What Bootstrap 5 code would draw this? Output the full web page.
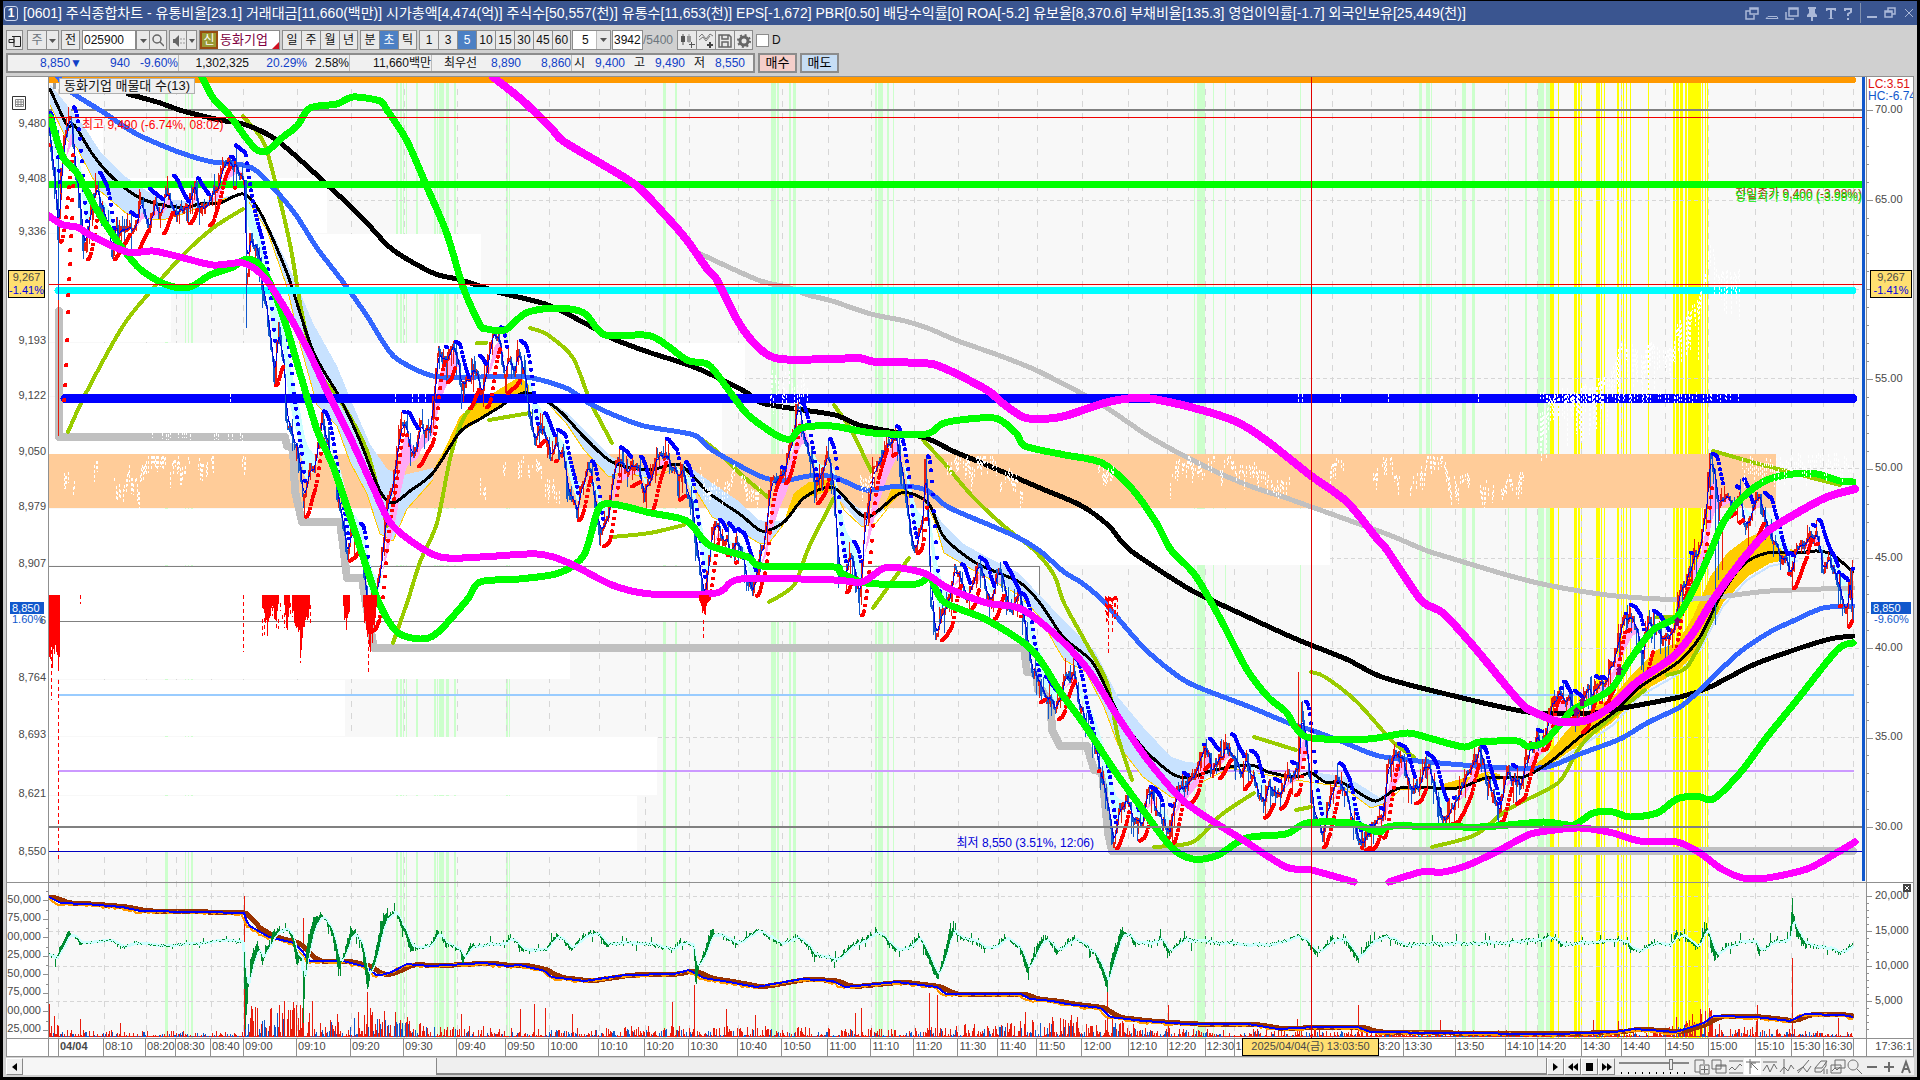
<!DOCTYPE html>
<html lang="ko">
<head>
<meta charset="utf-8">
<meta name="viewport" content="width=device-width, initial-scale=1">
<title>[0601] 주식종합차트</title>
<link rel="stylesheet" href="https://cdn.jsdelivr.net/npm/bootstrap@5.3.0/dist/css/bootstrap.min.css">
<style>
  body{font-family:"Liberation Sans","Noto Sans CJK KR",sans-serif;font-size:12px;line-height:16px;color:#111;background:#d0d0d0;border:solid #000;border-width:1px 3px 3px 3px}
  .title-strip{background:#3a5590;color:#fff;height:24px;padding:0;flex:none}
  .title-strip .win-no{width:14px;height:15px;border:1px solid #cfd8ee;border-radius:3px;font-size:12px;line-height:13px;font-weight:bold;margin:0 5px 0 1px;text-align:center}
  .title-strip h1{font-size:14px;line-height:22px;font-weight:normal}
  .title-strip button{border:0;background:none;padding:0;width:20px;height:20px;color:#aab8d8;line-height:0}
  .tools{height:20px;margin:5px 3px 3px 3px;flex:none}
  .tools>*{height:20px;flex:none}
  .tb{background:#e9e9e9;border:1px solid #8c8c8c;border-right-width:0;padding:0;width:19px;line-height:16px;color:#111;text-align:center}
  .tb:last-child{border-right-width:1px}
  .tb.on{background:#4c80c4;color:#fff}
  .fld{border:1px solid #8c8c8c;background:#fff;font-size:12px;padding:0 1px;border-radius:0;color:#111;height:20px}
  .info{height:20px;margin:0 3px 3px 3px;flex:none}
  .quote{background:#f0f0f0;border:2px solid #8c8c8c;width:749px;color:#111}
  .quote>div{border-right:1px solid #bbb;height:16px;text-align:right}
  .quote>div:last-child{border-right:0}
  .quote b{font-weight:normal;color:#1040c8}
  .quote span,.quote b{display:inline-block}
  .w48{width:48px}.w50{width:50px}
  .order{border:2px solid #8c8c8c;height:20px;width:39px;padding:0;font-size:13px;line-height:14px;margin-left:3px}
  .chart-box{margin:0 3px;border:1px solid #909090;background:#fff;flex:1 1 0;min-height:0}
  .axis-l{width:42px;border-right:1px solid #909090;flex:none}
  .axis-r{width:47px;border-left:1px solid #909090;flex:none}
  .plots{background:#f8f8f8;min-width:0}
  .plots svg.plot{display:block;width:100%;height:100%}
  .ax{position:absolute;font-size:11px;line-height:12px;margin-top:-7px;color:#484848;white-space:nowrap}
  .axis-l .ax{right:2px}
  .axis-l .ax.vol{right:7px}
  .axis-r .ax{left:8px}
  .tick{position:absolute;left:0;height:1px;background:#909090}
  .axis-l .tick{left:auto;right:0}
  .flag{position:absolute;background:#ffdf70;border:1px solid #000;font-size:11px;line-height:13px;text-align:center;color:#484848;z-index:2;overflow:hidden;white-space:nowrap}
  .flag em{display:block;font-style:normal;color:#0000e0}
  .now{position:absolute;background:#1158cc;color:#fff;font-size:11px;line-height:12px;z-index:2;padding:0 2px}
  .note{position:absolute;font-size:12px;line-height:14px;white-space:nowrap}
  .name-tag{left:10px;top:1px;border:1px solid #b0b0b0;background:#f0f0f0;padding:0 4px;font-size:13px}
  .time-row{height:18px;border-top:1px solid #909090;flex:none}
  .time-row .tc{flex:none;border-left:1px solid #909090;font-size:11px;line-height:15px;white-space:nowrap;padding-left:1px;color:#484848;overflow:hidden}
  .scroll{height:17px;margin:1px 3px 2px 3px;flex:none;background:#efefef}
  .sb{border:1px solid #888;border-top-color:#fff;border-left-color:#fff;background:#efefef;padding:0;width:17px;height:17px;line-height:0;color:#000;flex:none}
  .track{width:413px;background:#f6f6f6;flex:none}
  .thumb{background:#efefef;border:1px solid #888;border-width:0 1px 2px 1px}
  .ic{width:17px;height:17px;border:0;background:none;padding:0;line-height:0;color:#6b6b6b;flex:none}
  .speed{width:70px;margin:0 4px;flex:none;height:17px;appearance:none;background:
     linear-gradient(#888,#888) 0 4px/100% 2px no-repeat,
     repeating-linear-gradient(90deg,#000 0 1px,transparent 1px 7px) 2px 14px/100% 2px no-repeat}
  .speed::-webkit-slider-thumb{appearance:none;width:4px;height:11px;margin-top:-4px;background:#eee;border:1px solid #777}
</style>
</head>
<body class="vh-100 m-0 d-flex flex-column overflow-hidden">

<header class="title-strip d-flex align-items-center">
  <span class="win-no">1</span>
  <h1 class="m-0 text-nowrap flex-grow-1">[0601] 주식종합차트 - 유통비율[23.1] 거래대금[11,660(백만)] 시가총액[4,474(억)] 주식수[50,557(천)] 유통수[11,653(천)] EPS[-1,672] PBR[0.50] 배당수익률[0] ROA[-5.2] 유보율[8,370.6] 부채비율[135.3] 영업이익률[-1.7] 외국인보유[25,449(천)]</h1>
  <button aria-label="분리"><svg width="14" height="13" fill="none" stroke="currentColor" stroke-width="1.5"><path d="M5 4H1v8h8V8M5 1h8v6H5zM5 2h8"/></svg></button>
  <button aria-label="접기"><svg width="14" height="13" fill="none" stroke="currentColor"><path d="M3 9.5h9l1 2H1z"/></svg></button>
  <button aria-label="복제"><svg width="14" height="13" fill="none" stroke="currentColor" stroke-width="1.5"><path d="M4 1h9v8H4zM4 2h9M1 5v7h8"/></svg></button>
  <button aria-label="고정"><svg width="14" height="15" fill="currentColor"><path d="M3 1h8v2h-1v4l2 2v2H8v4H6v-4H2V9l2-2V3H3z"/></svg></button>
  <button aria-label="글꼴" style="width:18px"><svg width="12" height="13" fill="currentColor"><path d="M1 1h10v3h-1L9 3H7v8l2 1H3l2-1V3H3L2 4H1z"/></svg></button>
  <button aria-label="도움말" style="width:16px;margin-right:4px"><svg width="10" height="13" fill="none" stroke="currentColor" stroke-width="2"><path d="M2 4V2h6v3L5 7v2M5 11v2"/></svg></button>
  <button aria-label="최소화" style="border-left:1px solid #7f8fae"><svg width="12" height="13" fill="currentColor"><path d="M2 9h10v2H2z"/></svg></button>
  <button aria-label="이전 크기"><svg width="12" height="12" fill="none" stroke="currentColor" stroke-width="1.5"><path d="M4 4V1h7v6H8M1 4h7v6H1zM1 5h7"/></svg></button>
  <button aria-label="닫기" style="width:17px"><svg width="10" height="10" stroke="currentColor"><path d="M1 1l8 8M9 1l-8 8"/></svg></button>
</header>

<div class="tools d-flex">
  <button class="tb" style="border-right-width:1px;width:17px;margin-right:4px" aria-label="메뉴"><svg width="13" height="12" fill="none" stroke="#222"><path d="M4 1.500h8.500v10H7M1 4.500h5v3h-5zM6 2v10" /></svg></button>
  <div class="d-flex" style="margin-right:2px"><button class="tb text-secondary">주</button><button class="tb" style="width:13px" aria-label="주기"><svg width="7" height="4"><path d="M0 0h7L3.500 4z" fill="#555"/></svg></button></div>
  <button class="tb" style="border-right-width:1px;width:19px;margin-right:2px">전</button>
  <input class="fld" style="width:54px" value="025900" aria-label="종목코드">
  <button class="tb" style="width:13px" aria-label="종목 목록"><svg width="7" height="4"><path d="M0 0h7L3.500 4z" fill="#555"/></svg></button>
  <button class="tb" style="border-right-width:1px;width:18px;margin-right:2px" aria-label="검색"><svg width="12" height="13" fill="none" stroke="#666" stroke-width="1.500"><circle cx="5" cy="5" r="4"/><path d="M8 8l4 4"/></svg></button>
  <div class="d-flex" style="margin-right:2px"><button class="tb" style="width:17px" aria-label="음성"><svg width="13" height="12"><path d="M1 4h2l4-4v12L3 8H1z" fill="#666"/><path d="M9 3v2M9 7v2M12 3v2M12 7v2" stroke="#999"/></svg></button><button class="tb" style="width:11px" aria-label="음성 설정"><svg width="6" height="4"><path d="M0 0h6L3 4z" fill="#555"/></svg></button></div>
  <div class="d-flex fld p-0 position-relative" style="width:81px;margin-right:2px"><span style="background:#999a33;border:2px solid #984c10;color:#fff;width:18px;line-height:14px;text-align:center">신</span><span style="color:#800040;padding-left:2px;line-height:17px;font-size:13px">동화기업</span><svg class="position-absolute end-0 bottom-0" width="7" height="7"><path d="M7 0v7H0z" fill="#d01020"/></svg></div>
  <div class="d-flex" style="margin-right:2px"><button class="tb">일</button><button class="tb">주</button><button class="tb">월</button><button class="tb">년</button></div>
  <div class="d-flex" style="margin-right:2px"><button class="tb">분</button><button class="tb on">초</button><button class="tb">틱</button></div>
  <div class="d-flex" style="margin-right:1px"><button class="tb">1</button><button class="tb">3</button><button class="tb on">5</button><button class="tb">10</button><button class="tb">15</button><button class="tb">30</button><button class="tb">45</button><button class="tb">60</button></div>
  <div class="position-relative" style="margin-right:1px"><select class="fld" style="width:39px;appearance:none;padding-left:9px" aria-label="간격"><option>5</option></select><svg class="position-absolute end-0 top-0" width="15" height="20"><path d="M0 .5h14.500v19H0z" fill="#e9e9e9" stroke="#8c8c8c"/><path d="M4 8h7l-3.500 4z" fill="#555"/></svg></div>
  <input class="fld" style="width:31px" value="3942" aria-label="봉 개수">
  <span class="text-secondary" style="width:34px;line-height:20px">/5400</span>
  <div class="d-flex" style="margin-right:3px">
    <button class="tb" aria-label="봉 추가"><svg width="15" height="15" fill="#555"><path d="M1 3h4v6H1zM2.500 1h1v11h-1z"/><path d="M7 3h4v6H7zM8.500 1h1v9h-1z" fill="#999"/><path d="M11 9h1v2h3v1h-3v3h-1v-3H9v-1h2z"/></svg></button>
    <button class="tb" aria-label="지표 추가"><svg width="15" height="15" fill="none" stroke="#777"><path d="M0 4l3-3 4 5 4-5 3 2M0 7l4-3 3 4 4-5"/><path d="M11 9v6M8 12h6" stroke="#444" stroke-width="2"/></svg></button>
    <button class="tb" aria-label="저장"><svg width="14" height="14" fill="none" stroke="#666" stroke-width="1.500"><path d="M1 1h10l2 2v10H1zM4 1v4h6V1M4 13V8h6v5"/></svg></button>
    <button class="tb" aria-label="설정"><svg width="14" height="14" fill="none" stroke="#666"><circle cx="7" cy="7" r="4" stroke-width="3"/><circle cx="7" cy="7" r="6" stroke-width="2" stroke-dasharray="2 2.700"/></svg></button>
  </div>
  <label class="d-flex align-items-center"><input type="checkbox" class="m-0" style="appearance:none;width:13px;height:13px;background:#fff;border:1px solid #8c8c8c;margin-right:3px!important">D</label>
</div>

<div class="info d-flex">
  <div class="quote d-flex">
    <div style="width:171px"><b style="width:72px">8,850▼</b><b class="w48">940</b><b class="w48">-9.60%</b></div>
    <div style="width:171px"><span style="width:69px">1,302,325</span><b style="width:58px">20.29%</b><span style="width:42px">2.58%</span></div>
    <div style="width:82px">11,660백만</div>
    <div style="width:140px"><span style="width:38px">최우선</span><b style="width:44px">8,890</b><b class="w50">8,860</b></div>
    <div class="flex-grow-1 text-start"><span style="padding-left:2px;width:16px">시</span><b class="text-end" style="width:37px">9,400</b><span class="text-end" style="width:20px">고</span><b class="text-end" style="width:40px">9,490</b><span class="text-end" style="width:20px">저</span><b class="text-end" style="width:40px">8,550</b></div>
  </div>
  <button class="order" style="background:#f5cfca">매수</button>
  <button class="order" style="background:#c6ddf4">매도</button>
</div>

<main class="chart-box d-flex flex-column position-relative">
  <div class="d-flex flex-grow-1" style="min-height:0">
    <div class="axis-l position-relative overflow-hidden" id="axisL">
      <svg class="position-absolute" style="left:5px;top:19px" width="14" height="14" fill="none" stroke="#333"><path d="M.5.5h13v13H.5z"/><path d="M3.500 3.500h8v7h-8zM3.500 6h8M3.500 8.500h8M6 3.500v7M9 3.500v7" stroke="#888"/></svg>
    </div>
    <div class="plots position-relative flex-grow-1 overflow-hidden">
      <svg class="plot" id="plot" viewBox="49 77 1817 961" preserveAspectRatio="none" shape-rendering="crispEdges"></svg>
      <div class="note name-tag">동화기업 매물대 수(13)</div>
      <div class="note" style="left:33px;top:41px;color:#f00">최고 9,490 (-6.74%, 08:02)</div>
      <div class="note" style="right:772px;top:79%;color:#0000d8">최저 8,550 (3.51%, 12:06)</div>
      <div class="note" style="right:4px;top:110px;color:#993300">전일종가 9,400 (-3.98%)</div>
      <div class="note" style="right:4px;top:113px;color:#0e0">당일시가 9,400 (-3.98%)</div>
    </div>
    <div class="axis-r position-relative overflow-hidden" id="axisR">
      <span class="note" style="left:1px;top:0;color:#e01010">LC:3.51</span>
      <span class="note" style="left:1px;top:12px;color:#1158cc">HC:-6.74</span>
      <svg class="position-absolute" style="right:2px;top:84%" width="8" height="8"><path d="M0 0h8v8H0z" fill="#444"/><path d="M2 2l4 4M6 2L2 6" stroke="#fff"/></svg>
    </div>
  </div>
  <div class="time-row d-flex position-relative">
    <div style="width:41px;flex:none"></div>
    <div class="d-flex flex-grow-1" id="times"></div>
    <div class="text-end" style="width:47px;flex:none;border-left:1px solid #909090;font-size:11px;line-height:15px;padding-right:1px;color:#484848">17:36:1</div>
    <div class="flag" style="right:534px;top:-1px;width:137px;height:18px;line-height:15px">2025/04/04(금) 13:03:50</div>
  </div>
</main>

<footer class="scroll d-flex">
  <button class="sb" aria-label="왼쪽"><svg width="6" height="8"><path d="M5 0v8L0 4z"/></svg></button>
  <div class="track"></div>
  <div class="thumb flex-grow-1"></div>
  <button class="sb" aria-label="재생"><svg width="6" height="8"><path d="M0 0v8l5-4z"/></svg></button>
  <button class="sb" aria-label="느리게"><svg width="10" height="8"><path d="M5 0v8L0 4zM10 0v8L5 4z"/></svg></button>
  <button class="sb" aria-label="정지"><svg width="7" height="8"><path d="M0 0h7v8H0z"/></svg></button>
  <button class="sb" aria-label="빠르게"><svg width="10" height="8"><path d="M0 0v8l5-4zM5 0v8l5-4z"/></svg></button>
  <input type="range" class="speed" value="75" aria-label="속도">
  <div class="d-flex" id="icons"></div>
</footer>

<script src="https://cdn.jsdelivr.net/npm/bootstrap@5.3.0/dist/js/bootstrap.bundle.min.js"></script>
<script>
// ---------- helpers ----------
let seed = 20250404;
const rnd = () => (seed = (seed * 1664525 + 1013904223) % 4294967296) / 4294967296;
const P = s => s.trim().split(/[\s;]+/).map(p => p.split(',').map(Number));
const at = (pts, x) => {
  if (x <= pts[0][0]) return pts[0][1];
  for (let i = 1; i < pts.length; i++) if (x <= pts[i][0]) {
    const [a, b] = pts[i - 1], [c, d] = pts[i];
    return c === a ? d : b + (d - b) * (x - a) / (c - a);
  }
  return pts[pts.length - 1][1];
};
const out = [];
const rect = (x, y, w, h, f) => out.push(`<rect x="${x}" y="${y}" width="${w}" height="${h}" fill="${f}"/>`);
const path = (d, c, w, extra = '') => out.push(`<path d="${d}" fill="none" stroke="${c}" stroke-width="${w}" stroke-linejoin="round" stroke-linecap="round" ${extra}/>`);
const line = (s, c, w, extra) => path('M' + (typeof s === 'string' ? P(s) : s).map(p => p[0].toFixed(1) + ' ' + p[1].toFixed(1)).join('L'), c, w, extra);
// smooth curve through the given points
const curve = (s, c, w) => {
  const p = P(s); let d = `M${p[0][0]} ${p[0][1]}`;
  for (let i = 0; i < p.length - 1; i++) {
    const a = p[i - 1] || p[i], b = p[i], e = p[i + 1], g = p[i + 2] || e, k = 7;
    d += `C${(b[0] + (e[0] - a[0]) / k).toFixed(1)} ${(b[1] + (e[1] - a[1]) / k).toFixed(1)} ${(e[0] - (g[0] - b[0]) / k).toFixed(1)} ${(e[1] - (g[1] - b[1]) / k).toFixed(1)} ${e[0]} ${e[1]}`;
  }
  path(d, c, w);
};
const hl = (y, x0, x1, c, w) => path(`M${x0} ${y}H${x1}`, c, w, w < 3 ? 'stroke-linecap="butt"' : '');
const area = (top, bot, c) => out.push(`<path d="M${P(top).join('L')}L${P(bot).reverse().join('L')}Z" fill="${c}"/>`);

// ---------- session bands ----------
const green = P('165,3 185,1 188,1 191,2 396,2 400,2 403,1 406,1 416,2 434,2 437,1 439,5 446,3 454,2 506,2 509,1 663,3 675,2 771,5 777,2 789,2 793,3 875,2 878,5 887,2 893,1 1194,1 1197,8 1213,1 1225,1 1300,1 1419,3 1426,4 1431,1 1462,4 1472,3 1508,1 1525,2 1538,6 1546,4');
const yellow = P('1550,4 1558,1 1574,3 1578,2 1581,1 1596,4 1601,1 1604,1 1617,2 1621,1 1623,1 1626,1 1630,1 1648,1 1673,2 1676,3 1680,2 1682,1 1685,2 1688,13 1702,1 1705,1 1707,1');
green.forEach(b => rect(b[0], 77, b[1], 961, '#ccffcc'));
yellow.forEach(b => rect(b[0], 77, b[1], 961, '#ffff00'));
const gx = [58,104,146,176,211,243,297,351,404,457,506,549,599,645,689,738,782,828,871,914,958,998,1037,1082,1128,1167,1205,1234,1267,1332,1371,1403,1455,1505,1537,1581,1621,1665,1708,1755,1791,1823,1853];
gx.forEach(x => path(`M${x}.5 77V1038`, '#d6d6d6', 1, 'stroke-dasharray="6 6"'));
[200,289,378,468,558,648,737,896,931,966,1001].forEach(y => path(`M49 ${y}.5H1862`, '#d6d6d6', 1, 'stroke-dasharray="4 3"'));

// ---------- volume-by-price ----------
[[123,55,103],[178,55,327],[234,53,481],[287,55,171],[343,53,745],[397,57,722],[509,56,1330],[566,55,1039],[622,57,570],[680,56,345],[737,58,657],[796,55,637]]
  .forEach(b => rect(49, b[0], b[2] - 49, b[1], '#fff'));
rect(49, 454, 1727, 54, '#ffcc99');
path('M49 566.5H1039.5V621.5H49', '#808080', 1);

// ---------- levels ----------
hl(80, 49, 1853, '#ff9900', 6);
hl(110, 49, 1862, '#808080', 2);
hl(695, 59, 1853, '#99ccff', 2);
hl(771, 59, 1853, '#cc99ff', 2);
line('59,311 59,437 285,437 287,446 293,448 295,491 302,522 340,522 343,545 347,578 362,578 366,605 374,648 1024,648 1027,672 1036,673 1038,690 1050,691 1052,730 1060,746 1087,746 1094,770 1102,772 1108,833 1112,851 1853,851', '#c0c0c0', 8);

// ---------- price ----------
const price = P(`49,130 54,180 58,240 62,150 68,120 72,135 76,180 82,230 84,250 90,215 96,190 100,200 106,225 112,250 116,215 118,235 126,235 134,230 140,195 144,215 150,225 155,200 160,215 165,190 170,200 176,215 184,210 190,195 194,180 198,205 202,210 208,205 214,195 220,175 226,168 234,162 240,170 244,180 246,280 250,240 258,260 264,300 270,340 274,380 278,330 283,370 286,420 290,430 295,440 300,465 303,500 308,470 314,465 318,440 322,420 326,445 332,470 338,500 343,530 347,565 351,530 355,520 360,540 365,580 368,630 374,600 378,570 382,540 388,500 393,480 398,440 402,420 406,420 410,450 414,460 420,435 426,440 430,430 434,390 438,350 442,365 448,360 456,350 462,390 468,380 474,360 480,383 485,370 490,340 494,335 500,350 505,375 509,360 514,365 519,350 524,375 530,420 535,440 540,415 546,440 550,455 556,440 562,455 568,490 573,510 577,520 580,490 587,470 592,490 598,520 604,535 608,520 612,480 616,460 622,475 630,480 638,470 644,500 650,475 656,460 664,450 670,465 676,480 682,470 686,500 692,510 696,560 704,600 709,560 712,530 718,540 725,545 732,550 740,540 746,575 752,590 758,560 764,540 768,500 772,480 778,470 785,465 790,450 796,410 800,425 805,440 810,460 815,490 820,475 825,460 830,465 834,500 838,560 844,580 850,560 856,590 860,590 864,520 870,490 875,460 882,450 888,440 894,440 900,460 906,500 911,540 916,550 922,520 925,470 928,520 930,600 935,635 942,610 948,600 954,570 960,580 966,610 970,600 976,570 984,590 990,600 996,570 1000,560 1006,600 1012,600 1018,590 1024,620 1030,660 1036,670 1044,690 1052,700 1060,710 1066,680 1072,680 1080,700 1086,730 1092,750 1098,760 1104,790 1110,820 1113,838 1118,810 1124,800 1130,800 1134,810 1140,830 1146,800 1152,790 1158,820 1164,830 1170,830 1176,790 1182,780 1188,780 1194,770 1200,750 1206,745 1212,780 1220,760 1226,750 1234,760 1240,765 1246,760 1254,780 1262,800 1270,790 1280,795 1290,780 1298,770 1301,700 1306,740 1310,780 1314,810 1322,830 1328,800 1336,780 1344,790 1350,820 1358,838 1364,842 1370,830 1374,815 1382,810 1388,760 1395,750 1402,770 1410,790 1418,790 1424,770 1430,780 1436,790 1445,820 1450,800 1458,790 1464,780 1472,770 1480,750 1487,780 1495,800 1500,815 1506,770 1512,775 1522,780 1530,755 1537,740 1544,740 1550,710 1556,705 1565,700 1572,710 1580,700 1587,690 1593,700 1600,680 1607,685 1612,670 1618,640 1622,620 1630,630 1636,635 1643,650 1648,620 1655,625 1662,640 1668,640 1674,620 1678,590 1684,580 1690,570 1696,560 1702,530 1706,500 1709,460 1714,480 1718,510 1725,510 1733,515 1740,500 1744,530 1752,510 1758,500 1764,520 1770,545 1778,550 1785,560 1790,580 1795,550 1802,550 1810,540 1818,540 1823,570 1828,560 1834,570 1840,590 1846,610 1850,580 1852,620`);
const bars = [];
let drift = 0;
for (let x = 49; x < 1854; x++) {
  drift = drift * .75 + (rnd() - .5) * 12;
  const c = Math.min(846, at(price, x) + drift);
  const o = bars.length ? bars[bars.length - 1].c : c;
  bars.push({ x, o, c, t: Math.min(o, c) - (rnd() < .3 ? rnd() * 16 : 2), b: Math.min(850, Math.max(o, c) + (rnd() < .3 ? rnd() * 22 : 2)) });
}
const ema = (n, src = bars.map(b => b.c)) => { let e = src[0]; return src.map(v => e += (v - e) * 2 / (n + 1)); };

// ---------- averages ribbon ----------
const lb = '#c8e2ff', am = '#ffcc00';
area('50,84 67,105 83,125 100,151 123,175 147,191 173,200 200,202 243,193', '50,105 67,140 77,148 90,173 100,191 127,214 150,219 163,220 180,215 200,207 243,195', lb);
area('244,194 253,200 273,234 293,276 313,323 337,366 353,405 370,444 387,469 400,476 433,468', '244,196 267,230 287,287 300,344 317,405 337,426 350,462 367,494 380,534 393,541 407,509 433,478', lb);
area('433,471 447,444 460,416 480,401 498,390 519,377 528,383 535,394', '433,474 460,433 480,420 498,409 523,394 535,396', am);
area('536,395 544,397 566,412 587,433 612,457 623,462 648,468', '536,395 551,407 566,423 584,450 609,477 623,472 648,478', lb);
area('683,463 694,470 712,483 737,500 759,520 772,522 784,520', '683,468 694,487 712,517 737,530 759,543 769,543 784,524', lb);
area('786,515 794,493 809,482 832,479 838,490', '786,520 805,498 834,490 838,492', am);
area('840,492 866,515 884,508', '840,500 862,527 884,510', lb);
area('884,505 894,484 905,484 910,496', '884,510 901,494 910,498', am);
area('924,497 944,525 962,543 987,557 1019,573 1032,587 1071,628 1096,653 1118,697 1143,727 1171,757 1186,762 1200,763 1215,768', '924,503 934,520 944,553 973,570 1019,595 1040,617 1054,643 1064,660 1086,672 1104,707 1118,745 1143,777 1171,797 1182,797 1200,783 1215,770', lb);
area('1315,772 1325,774 1343,776 1357,783 1379,797 1395,787', '1315,778 1343,787 1371,808 1386,803 1395,790', lb);
area('1440,785 1457,780 1486,772 1500,774', '1440,788 1457,788 1486,780 1500,780', am);
area('1523,776 1550,752 1567,730 1590,710 1613,697 1633,673 1657,650 1677,643 1693,617 1710,577 1727,553 1747,538 1767,530 1778,548 1797,550', '1523,779 1550,765 1580,744 1613,722 1640,693 1677,672 1700,647 1723,603 1747,577 1770,563 1797,558', am);
line('1550,767 1580,747 1613,725 1640,696 1677,675 1700,650 1723,606 1747,580 1770,566 1797,561', lb, 2);
line('50,105 67,140 77,148 90,173 100,191 127,214 150,219 163,220 180,215 200,207 243,193 267,230 287,287 300,344 317,405 337,426 350,462 367,494 380,534 393,541 407,509 433,480', am, 1);
line('551,407 566,423 584,450 609,477 623,472 648,478 683,467 694,487 712,517 737,530 759,543 769,543 784,524', am, 1);
line('834,490 844,510 862,527 876,523 888,508', am, 1);
line('924,500 934,520 944,553 973,570 1019,595 1040,617 1054,643 1064,660 1086,672 1104,707 1118,745 1143,777 1171,797 1182,797 1200,783 1230,768 1268,775 1296,780 1343,787 1371,808 1386,803 1400,790 1440,788', am, 1);

// fast ribbon between two short averages
const f = ema(10), s = ema(26);
for (let i = 1; i < bars.length; i++)
  out.push(`<path d="M${bars[i-1].x} ${f[i-1].toFixed(1)}L${bars[i].x} ${f[i].toFixed(1)}V${s[i].toFixed(1)}L${bars[i-1].x} ${s[i-1].toFixed(1)}Z" fill="${f[i] < s[i] ? '#ffaaf5' : '#ccffff'}"/>`);

// ---------- long averages ----------
curve('694,251 758,280 787,287 808,295 832,301 871,314 905,321 930,329 958,341 998,355 1040,372 1102,405 1150,437 1206,467 1250,486 1292,500 1384,533 1425,550 1457,560 1507,575 1547,585 1607,595 1660,599 1693,599 1727,596 1770,591 1853,588', '#c0c0c0', 5);
const olive = ['68,432 87,391 123,326 150,292 183,255 213,228 243,209','243,116 263,141 273,173 290,244 303,319 317,370 340,400 367,451 387,526','393,643 408,600 420,562 437,523 450,459 463,419 477,401','489,420 530,413','530,328 548,335 573,358 591,403 612,443','612,537 650,533 684,525','694,435 712,447 744,477 769,498','769,602 794,585 809,547 834,498','834,405 851,430 873,475','873,608 909,558','923,440 944,463 973,497 1005,527 1034,550 1054,575 1064,603 1086,643 1107,683 1118,737 1132,780','1154,847 1193,842 1221,815 1254,793','1254,737 1296,750','1311,672 1325,677 1357,702 1393,742 1414,757','1432,847 1475,835 1507,810 1550,788 1563,777 1583,743 1620,710 1645,690','1657,617 1680,617','1667,675 1687,667 1707,630 1717,607','1713,451 1770,467 1840,485','1296,810 1311,807','477,343 486,343'];
olive.forEach(o => curve(o, '#99cc00', 4));
curve('128,94 157,102 183,111 220,120 243,124 267,134 283,145 307,166 323,181 347,203 367,223 393,250 433,273 457,279 480,286 501,293 548,305 592,327 616,340 651,353 694,367 744,391 762,403 796,409 835,415 859,425 894,432 926,438 955,452 987,465 1040,488 1080,505 1108,525 1130,550 1184,586 1207,598 1250,618 1296,639 1346,659 1382,677 1446,694 1528,712 1593,713 1623,708 1680,697 1710,687 1753,665 1797,649 1830,639 1853,636', '#000', 5);
curve('58,77 71,92 103,112 133,132 163,146 190,156 213,162 243,165 260,174 293,211 317,248 343,282 367,316 383,342 397,359 433,376 480,377 526,377 566,388 587,402 609,413 644,426 694,435 712,450 762,477 787,480 809,476 834,477 866,490 898,486 926,490 948,507 987,524 1019,538 1040,551 1064,572 1082,583 1104,602 1143,647 1179,677 1200,688 1250,707 1286,722 1311,730 1343,742 1379,756 1429,762 1507,768 1547,767 1580,754 1620,739 1647,723 1680,707 1700,690 1713,677 1740,652 1770,632 1793,621 1823,608 1853,606', '#3366ff', 5);
curve('50,89 67,125 75,126 93,155 113,178 140,198 167,206 187,207 200,204 220,203 243,194 260,212 287,273 313,351 340,398 360,441 380,491 393,503 410,491 433,473 460,432 480,419 498,408 523,393 541,398 562,413 584,437 612,462 648,470 680,465 709,493 741,515 762,531 784,522 805,497 834,488 866,517 901,493 928,503 944,537 976,563 1019,582 1040,603 1064,638 1093,663 1118,713 1143,748 1171,773 1189,778 1214,770 1250,765 1268,772 1296,777 1311,773 1325,782 1343,783 1375,801 1400,788 1457,788 1486,778 1523,777 1550,762 1580,737 1613,713 1640,687 1677,663 1700,637 1720,597 1743,565 1767,553 1797,553 1817,551 1833,555 1853,572', '#000', 3);

hl(184.5, 49, 1862, '#00ff00', 7);
hl(290.5, 58, 1853, '#00ffff', 7);
hl(398.5, 65, 1853, '#0000ff', 9);

// ---------- candles ----------
let up = '', dn = '', upw = '', dnw = '';
bars.forEach((b, i) => {
  const rise = b.c < b.o, x = b.x + .5;
  const wick = `M${x} ${b.t.toFixed(0)}V${b.b.toFixed(0)}`;
  if (rise) upw += wick; else dnw += wick;
  if (i % 3 === 0) { const body = `M${b.x} ${(b.o + 1).toFixed(0)}V${(b.c - 1).toFixed(0)}`; if (rise) up += body; else dn += body; }
});
path(upw, '#e81c0c', 1, 'stroke-linecap="butt"'); path(dnw, '#1158cc', 1, 'stroke-linecap="butt"');
path(up, '#e81c0c', 2, 'stroke-linecap="butt"'); path(dn, '#1158cc', 2, 'stroke-linecap="butt"');
path('M58.5 130V436M246.500 180V328M1710.500 455V520M1715.500 470V625M1718.500 500V580', '#1158cc', 1);
path('M58.5 300V436M1298.500 672V780M1722.500 520V570M1852.500 560V620', '#e81c0c', 1);
line(ema(4).map((v, i) => [49 + i, v]), '#0000e0', 1);

// ---------- parabolic stop dots ----------
let rising = true, ep = bars[0].t, sar = bars[0].b + 10, af = .02, red = '', blue = '';
bars.forEach(b => {
  sar += af * (ep - sar);
  if (rising) {
    if (b.t < ep) { ep = b.t; af = Math.min(.2, af + .02); }
    if (b.b > sar) { rising = false; sar = ep; ep = b.b; af = .02; }
  } else {
    if (b.b > ep) { ep = b.b; af = Math.min(.2, af + .02); }
    if (b.t < sar) { rising = true; sar = ep; ep = b.t; af = .02; }
  }
  const d = `M${b.x} ${sar.toFixed(1)}h.1`;
  if (rising) red += d; else blue += d;
});
path(red, '#ff0000', 4); path(blue, '#0000ff', 4);
path('M64 400h.1M65 385h.1M66 365h.1M67 340h.1M68 312h.1M68 295h.1M69 279h.1M70 264h.1M70 250h.1M71 236h.1M72 218h.1M72 200h.1M73 186h.1', '#f00', 4);

// ---------- envelopes ----------
const G = '#00ff00', M = '#ff00ff';
curve('202,77 213,98 230,116 247,139 257,150 267,151 283,137 297,126 310,108 337,104 353,97 380,101 387,110 407,141 427,187 447,234 463,287 480,325 487,329 505,330 526,313 555,308 584,313 605,335 651,336 687,360 709,365 730,392 748,415 776,435 791,439 801,428 832,426 873,433 926,434 944,423 980,418 998,419 1016,433 1023,445 1040,450 1065,455 1102,463 1133,490 1157,524 1171,550 1195,575 1221,620 1246,668 1268,697 1286,712 1296,728 1311,738 1368,739 1407,733 1429,738 1464,747 1480,742 1517,741 1527,746 1543,743 1557,728 1573,710 1597,698 1613,687 1630,660 1653,630 1677,617 1693,590 1710,553 1723,523 1743,497 1767,480 1793,474 1817,474 1840,481 1853,482', G, 7);
curve('50,117 63,157 77,173 97,210 117,241 140,269 167,285 190,287 210,275 233,267 247,259 263,269 283,316 300,373 317,430 333,466 350,516 367,569 380,605 397,632 420,639 437,633 467,600 480,582 519,579 559,573 584,555 598,510 612,504 651,513 687,521 709,545 748,557 762,566 834,567 841,573 866,583 916,584 930,578 944,602 987,620 1032,650 1061,693 1086,727 1114,770 1143,810 1171,847 1193,859 1218,855 1246,838 1286,834 1307,823 1350,823 1379,832 1393,826 1480,827 1543,822 1573,825 1593,813 1613,812 1630,817 1657,813 1677,799 1697,796 1713,799 1740,773 1767,737 1797,700 1837,650 1853,643', G, 7);
curve('493,77 522,100 551,128 563,141 600,163 637,186 665,215 686,239 708,270 717,280 739,323 759,348 780,359 834,359 859,358 876,362 923,363 944,368 987,390 1001,402 1023,417 1040,419 1065,416 1108,402 1145,398 1194,408 1237,422 1267,441 1310,475 1347,502 1378,540 1387,550 1421,600 1443,613 1475,648 1507,687 1525,707 1543,716 1560,722 1587,720 1613,705 1637,682 1673,657 1693,633 1713,600 1740,563 1767,532 1797,513 1827,497 1855,489', M, 8);
curve('49,216 63,225 77,227 90,235 127,252 153,251 180,257 213,265 243,263 263,276 283,305 307,348 327,391 350,437 373,487 393,526 437,556 480,557 537,554 569,563 612,585 651,594 716,593 741,579 834,580 862,582 884,568 901,568 926,574 948,588 987,603 1019,608 1050,630 1086,667 1118,717 1150,763 1186,803 1243,840 1286,867 1311,870 1354,882', M, 7);
curve('1389,882 1421,872 1443,872 1468,865 1496,852 1528,835 1547,831 1580,828 1613,833 1640,841 1677,842 1700,853 1720,868 1743,878 1767,878 1807,869 1833,855 1855,842', M, 7);

// entry marks
P('1576,711 1582,701 1619,670 1677,621').forEach(p => out.push(`<path d="M${p[0]-4} ${p[1]}l4-4 4 4h-2v5h-4v-5z" fill="#800080"/>`));

// ---------- hanging pressure bars ----------
let hang = '';
[[49,59,88,0],[262,271,50,.3],[272,278,34,.3],[284,289,45,.2],[292,309,72,.5],[343,349,48,.5],[363,376,75,.5],[699,708,30,.5]].forEach(([a, b, d, k]) => {
  for (let x = a; x <= b; x++) {
    const w = k ? 1 - Math.abs((x - (a + b) / 2) / ((b - a) / 2 + 1)) : 1;
    hang += `M${x}.5 595v${Math.round(d * (.5 + .4 * rnd()) * (w * .8 + .2))}`;
  }
});
path(hang, '#f00', 1, 'stroke-linecap="butt"');
let dash = 'M58.5 680V860M51.500 650V700M243.500 595V652M80.500 595V604M703.500 620V640M300.500 640V663M368.500 640V674M1108.500 600V655M1112.500 600V635';
for (let x = 1105; x < 1118; x++) dash += `M${x}.5 ${596 + rnd() * 3 | 0}v${6 + rnd() * 20 | 0}`;
for (let x = 262; x < 312; x += 2) dash += `M${x}.5 ${600 + rnd() * 20 | 0}v${6 + rnd() * 16 | 0}`;
path(dash, '#f00', 1, 'stroke-dasharray="4 3" stroke-linecap="butt"');

// ---------- faint echo of the price inside the volume bars ----------
let echo = '';
[[64,75],[94,98],[112,140],[140,166],[170,190],[198,214],[240,246],[480,486],[502,506],[516,560],[700,760],[860,878],[946,1024],[1098,1114],[1170,1215],[1220,1290],[1330,1345],[1370,1400],[1410,1470],[1480,1495],[1500,1524]].forEach(([a, b]) => {
  let y = 462 + rnd() * 24;
  for (let x = a; x < b; x++) { y = Math.max(456, Math.min(492, y + (rnd() - .5) * 16)); if (rnd() > .3) echo += `M${x}.5 ${y | 0}v${4 + rnd() * 14 | 0}`; }
});
for (let x = 1540; x < 1742; x++) { const y = 235 + (at(price, x) - 455) * .62; if (rnd() > .3) echo += `M${x}.5 ${y + rnd() * 10 | 0}v${6 + rnd() * rnd() * 60 | 0}`; }
for (let x = 1742; x < 1853; x += 2) echo += `M${x}.5 ${452 + rnd() * 20 | 0}v${6 + rnd() * 14 | 0}`;
for (let x = 770; x < 808; x++) if (rnd() > .5) echo += `M${x}.5 ${370 + rnd() * 30 | 0}v${6 + rnd() * 20 | 0}`;
for (let x = 140; x < 246; x += 2) if (rnd() > .6) echo += `M${x}.5 ${432 + rnd() * 4 | 0}v6`;
[230,395,412,418,425,1298,1302,1340,1388,1478].forEach(x => echo += `M${x}.5 394v8`);
for (let x = 1540; x < 1740; x++) if (rnd() > .72) echo += `M${x}.5 ${392 + rnd() * 5 | 0}v7`;
path(echo, '#fff', 1, 'stroke-dasharray="3 2" stroke-linecap="butt"');

// ---------- thin markers over everything ----------
hl(117.5, 49, 1862, '#f00000', 1);
hl(284.5, 49, 1862, '#f00000', 1);
hl(827, 49, 1862, '#808080', 2);
hl(851.5, 49, 1862, '#0000c0', 1);
rect(1862, 77, 3, 804, '#1158cc');
rect(53, 83, 3, 6, '#999');

// ---------- lower panel ----------
rect(49, 882, 1817, 1, '#909090');
let vr = '', vb = '';
const env = P('49,22 58,14 62,5 240,4 244,20 300,28 350,16 372,22 420,10 520,6 700,8 900,6 1000,10 1060,14 1110,16 1150,6 1400,5 1640,4 1680,10 1708,22 1725,8 1853,3');
for (let x = 49; x < 1853; x++) {
  const h = Math.max(1, at(env, x) * Math.pow(rnd(), 1.8) * 1.6) | 0;
  if (rnd() < .72) vr += `M${x}.5 1037v-${h}`; else vb += `M${x}.5 1037v-${Math.ceil(h * .7)}`;
}
P('244,141 284,36 293,35 303,119 367,45 80,18 120,14 520,28 534,33 545,29 572,23 672,35 694,52 726,28 755,22 461,23 855,24 861,29 929,44 937,42 1025,25 1052,20 1107,46 1168,32 1297,18 1358,32 1440,17 1593,17 1618,16 1676,20 1700,28 1709,29 1757,32 1756,16 1792,79 1838,19').forEach(p => vr += `M${p[0]}.5 1037v-${p[1]}`);
path(vb, '#1158cc', 1, 'stroke-linecap="butt"'); path(vr, '#e81c0c', 1, 'stroke-linecap="butt"');

const flow = P('49,897 61,903 86,904 122,907 141,911 202,912 244,913 248,925 269,937 294,943 303,952 309,961 343,961 367,967 377,976 392,972 407,964 429,966 484,963 508,966 520,965 545,971 551,977 585,981 625,975 674,974 689,970 704,978 729,982 756,987 802,979 833,981 845,987 897,982 937,987 946,994 1021,994 1030,999 1052,1001 1067,1004 1101,1008 1110,1017 1144,1021 1187,1024 1248,1024 1278,1029 1315,1027 1358,1027 1370,1032 1450,1033 1554,1034 1615,1032 1634,1029 1676,1032 1704,1023 1713,1016 1756,1017 1790,1021 1805,1014 1842,1015 1854,1017');
const sample = fn => { const r = []; for (let x = 49; x <= 1853; x += 3) r.push([x, fn(x)]); return r; };
line(sample(x => (at(flow, x - 6) + at(flow, x - 12) + at(flow, x - 2)) / 3), '#993300', 5);
line(sample(x => at(flow, x + 2) + 1 + (rnd() - .5) * 3), '#ff9900', 2);
line(sample(x => at(flow, x)), '#0000ff', 2);

const osc = P('49,955 55,958 68,930 80,945 90,942 110,940 122,947 135,942 155,946 200,943 220,940 243,943 245,1030 250,960 257,940 262,965 272,930 280,930 290,930 296,965 302,960 303,1025 306,950 312,920 321,912 332,935 338,975 350,928 360,940 367,990 375,950 383,915 395,912 410,950 430,945 436,930 445,945 460,950 462,965 470,945 500,945 510,935 520,950 545,950 556,935 570,950 583,935 597,932 605,945 640,943 672,950 680,940 693,945 695,980 710,930 735,945 757,930 780,945 795,935 815,955 836,960 850,945 865,938 880,933 893,950 907,948 918,935 930,965 937,980 950,925 960,938 990,950 1005,935 1020,950 1027,975 1035,945 1045,935 1056,955 1072,935 1085,945 1095,955 1107,992 1110,960 1121,928 1135,945 1160,938 1168,955 1180,940 1210,943 1270,945 1298,935 1317,955 1332,937 1345,943 1358,962 1365,945 1385,935 1400,945 1500,943 1553,937 1560,945 1618,940 1638,952 1650,943 1670,945 1677,930 1685,940 1697,950 1706,925 1714,960 1725,945 1755,940 1758,955 1770,942 1789,940 1792,897 1796,935 1805,947 1830,947 1838,955 1853,943');
const ov = []; for (let x = 49; x < 1853; x++) ov.push(at(osc, x) + (rnd() - .5) * (rnd() < .12 ? 20 : 5) * (x > 60 && x < 243 ? .5 : 1));
const os = ema(9, ov);
let og = ''; ov.forEach((v, i) => { og += `M${49 + i}.5 ${v.toFixed(0)}V${(os[i] + (v > os[i] ? 1 : -1)).toFixed(0)}`; });
line(os.map((v, i) => [49 + i, v]), '#ccffff', 3);
path(og, '#008c30', 1, 'stroke-linecap="butt"');

rect(1311, 77, 1, 961, '#e00000');
document.getElementById('plot').innerHTML = out.join('');

// ---------- axes ----------
const pct = y => ((y - 77) / 961 * 100).toFixed(2) + '%';
const L = document.getElementById('axisL'), R = document.getElementById('axisR');
const label = (el, y, t, cls = '') => el.insertAdjacentHTML('beforeend', `<span class="ax ${cls}" style="top:${pct(y)}">${t}</span>`);
[[124,'9,480'],[179,'9,408'],[232,'9,336'],[341,'9,193'],[396,'9,122'],[452,'9,050'],[507,'8,979'],[564,'8,907'],[621,'6'],[678,'8,764'],[735,'8,693'],[794,'8,621'],[852,'8,550'],[900,'50,000','vol'],[918,'75,000','vol'],[937,'00,000','vol'],[955,'25,000','vol'],[974,'50,000','vol'],[992,'75,000','vol'],[1011,'00,000','vol'],[1029,'25,000','vol']].forEach(a => label(L, ...a));
[[110,'70.00'],[200,'65.00'],[379,'55.00'],[468,'50.00'],[558,'45.00'],[648,'40.00'],[737,'35.00'],[827,'30.00'],[896,'20,000'],[931,'15,000'],[966,'10,000'],[1001,'5,000']].forEach(a => label(R, ...a));
for (let i = 0; i < 41; i++) R.insertAdjacentHTML('beforeend', `<i class="tick" style="top:${pct(110 + i * 17.93)};width:${i % 5 ? 2 : 6}px"></i>`);
for (let i = 0; i < 20; i++) R.insertAdjacentHTML('beforeend', `<i class="tick" style="top:${pct(896 + i * 7)};width:${i % 5 ? 2 : 5}px"></i>`);
for (let i = 0; i < 16; i++) L.insertAdjacentHTML('beforeend', `<i class="tick" style="top:${pct(891 + i * 9.25)};width:${i % 2 ? 5 : 2}px"></i>`);
for (const el of [L, R]) el.insertAdjacentHTML('beforeend', `<i class="tick" style="top:${pct(882)};width:100%"></i>`);
[L, R].forEach((el, k) => {
  el.insertAdjacentHTML('beforeend', `<div class="flag" style="top:${pct(270)};left:${k ? 3 : 1}px;width:${k ? 42 : 37}px">9,267<em>-1.41%</em></div>`);
  el.insertAdjacentHTML('beforeend', `<div class="now" style="top:${pct(602)};left:${k ? 4 : 3}px;width:${k ? 40 : 34}px">8,850</div>`);
  el.insertAdjacentHTML('beforeend', `<span class="ax" style="top:${pct(620)};color:#1158cc;left:${k ? 7 : 5}px;right:auto">${k ? '-9.60%' : '1.60%'}</span>`);
});

// ---------- time scale ----------
const T = [[49,''],[59,'<b>04/04</b>'],[104,'08:10'],[146,'08:20'],[176,'08:30'],[211,'08:40'],[244,'09:00'],[297,'09:10'],[351,'09:20'],[404,'09:30'],[457,'09:40'],[506,'09:50'],[549,'10:00'],[599,'10:10'],[645,'10:20'],[689,'10:30'],[738,'10:40'],[782,'10:50'],[828,'11:00'],[871,'11:10'],[914,'11:20'],[958,'11:30'],[998,'11:40'],[1037,'11:50'],[1082,'12:00'],[1128,'12:10'],[1167,'12:20'],[1205,'12:30'],[1234,'1'],[1371,'13:20'],[1403,'13:30'],[1455,'13:50'],[1505,'14:10'],[1537,'14:20'],[1581,'14:30'],[1621,'14:40'],[1665,'14:50'],[1708,'15:00'],[1755,'15:10'],[1791,'15:30'],[1823,'16:30'],[1853,''],[1866,'']];
document.getElementById('times').innerHTML = T.slice(0, -1).map((t, i) => `<div class="tc" style="width:${((T[i + 1][0] - t[0]) / 18.17).toFixed(3)}%">${t[1]}</div>`).join('');

// ---------- bottom tool icons ----------
const I = [['새 창','M1 1h9v4M1 1v12h5M6 6h9v9H6zM10.500 7v7M7 10.500h7'],['겹치기','M1 1h9v9H1zM5 6h10v8H5zM5 7h10'],['영역','M1 2h14M1 14h14M1 11l3-3 3 3 5-6 2 2'],['추세','M1 3h14M5 0v15M6 4l7 7M6 4v5M6 4h5'],['수평선','M1 3h14M1 12l4-6 3 7 4-8 3 5'],['수직선','M5 0v15M1 13l4-5 4 4 3-6 3 4'],['사선','M2 14L13 1M1 12l6-4 4 5 4-6'],['모두 지우기','M2 9l6-7h6l-5 7zM2 9v4h6l5-6V3M11 10v5M14 10v5'],['저장','M5 1h10v8H5zM1 6h10v8H1zM2 12l3-3 2 2 3-3'],['확대경','M6 1a5 5 0 1 0 .1 0M10 10l5 5'],['축소','M3 8h10'],['확대','M3 8h10M8 3v10'],['글자','M4 14L8 3l4 11M5 10h6']];
document.getElementById('icons').innerHTML = I.map((d, i) => `<button class="ic" aria-label="${d[0]}"${i === 3 ? ' style="background:#fff"' : ''}><svg width="16" height="16" fill="none" stroke="currentColor" stroke-width="${i > 9 ? 2 : 1}"><path d="${d[1]}"/></svg></button>`).join('');
</script>
</body>
</html>
